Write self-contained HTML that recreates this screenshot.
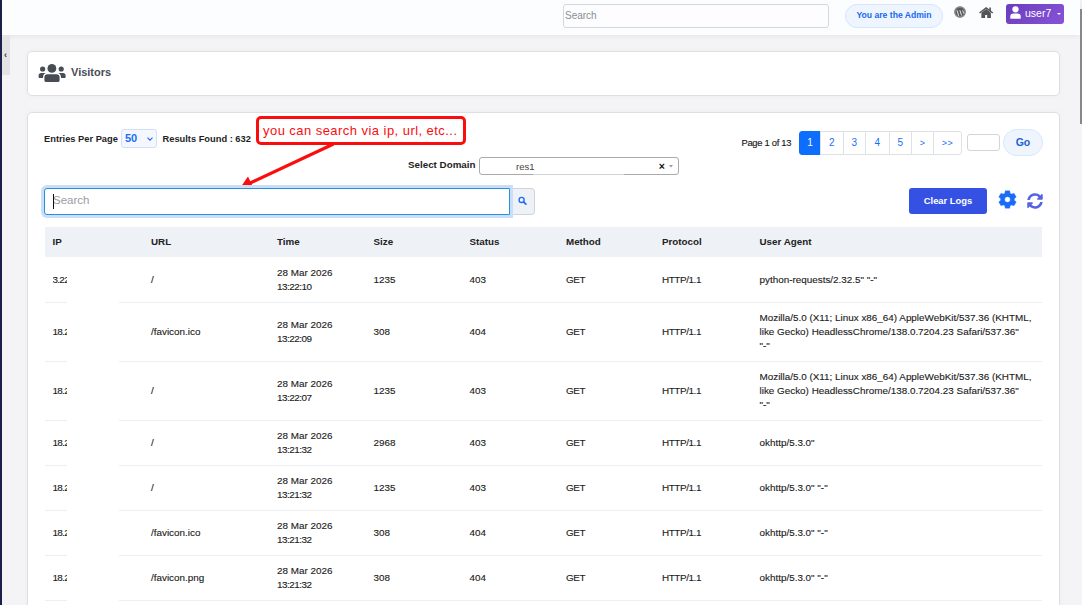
<!DOCTYPE html>
<html><head><meta charset="utf-8">
<style>
*{box-sizing:border-box;margin:0;padding:0}
html,body{width:1082px;height:605px;overflow:hidden}
body{font-family:"Liberation Sans",sans-serif;background:#f4f4f6;position:relative;color:#212529}
.abs{position:absolute}
svg{position:absolute;overflow:visible}
#lstripe{left:0;top:0;width:2px;height:605px;background:#1b1f4b}
#hdr{left:2px;top:0;width:1078px;height:35px;background:#fcfdff;box-shadow:0 1px 5px rgba(0,0,0,.07)}
#rbar{left:1080px;top:9px;width:2px;height:115px;background:#878787}
#tab{left:2px;top:35px;width:8px;height:40px;background:#e3e3e5}
#tabch{left:4px;top:50px;font-size:9px;color:#333;font-weight:bold}
#hsearch{left:563px;top:4px;width:266px;height:24px;border:1px solid #d5d7da;border-radius:3px;background:#fdfdff;font-size:10px;color:#8a8d93;padding:5px 0 0 1px}
#admin{left:845px;top:4px;width:98px;height:24px;border:1px solid #d5e5fa;border-radius:12px;background:#eff5fe;color:#1769f0;font-size:8.6px;font-weight:bold;text-align:center;line-height:21px}
#user{left:1006px;top:4px;width:58px;height:20px;border-radius:3px;background:linear-gradient(135deg,#6a3dbd,#8753d6);color:#fff}
#usertxt{left:1025px;top:7px;font-size:10.5px;color:#fff}
.card{background:#fff;border:1px solid #dfdfe1;border-radius:5px;box-shadow:0 0 6px rgba(0,0,0,.03)}
#card1{left:27px;top:51px;width:1033px;height:45px}
#card2{left:27px;top:112px;width:1033px;height:520px}
#vtitle{left:71px;top:66px;font-size:11px;font-weight:bold;color:#484c55}
.lbl{font-size:9.3px;font-weight:bold;color:#1e1e24;white-space:nowrap}
#epp{left:44px;top:133.5px}
#sel50{left:121px;top:129px;width:36px;height:19px;border:1px solid #cfe0f7;border-radius:3px;background:#f4f8fe}
#sel50t{left:125px;top:131.5px;font-size:11px;color:#1a6ef5;font-weight:bold}
#rf{left:162.5px;top:133.5px;font-size:9.3px}
#callout{left:256px;top:116px;width:210px;height:29px;border:3px solid #fb0d0d;border-radius:5px;background:#fff}
#callt{left:263px;top:123px;font-size:13px;letter-spacing:0.45px;color:#fb0d0d;white-space:nowrap}
#seld{left:408px;top:158.5px;font-size:9.8px}
#domain{left:479px;top:157px;width:200px;height:18px;border:1px solid #aaa;border-radius:3px;background:#fff}
#domt{left:516px;top:161px;font-size:9.5px;color:#444}
#domx{left:658.8px;top:160px;font-size:10.5px;font-weight:bold;color:#111}
#sinput{left:44px;top:188px;width:466px;height:27px;border:1.5px solid #2e8fdd;border-radius:3px 0 0 3px;background:#fff;box-shadow:0 0 0 3px #c9def8;z-index:2}
#sinpt,#caret{z-index:3}
#sinpt{left:53px;top:194px;font-size:11.5px;color:#9a9ca2}
#caret{left:52.5px;top:194px;width:1px;height:15px;background:#111}
#sbtn{left:509px;top:188px;width:26px;height:27px;border:1px solid #cfd4da;border-left:none;border-radius:0 4px 4px 0;background:#eef1f6}
#pagetxt{left:741.5px;top:137px;font-size:9.4px;color:#1a1a1a;letter-spacing:-0.3px;-webkit-text-stroke:0.15px #1a1a1a}
#pag{left:799px;top:131px;height:24px;display:flex}
#pag div{height:24px;border:1px solid #dee2e6;margin-left:-1px;color:#1a6ef5;font-size:10px;text-align:center;line-height:22px;background:#fff}
#pag div.act{background:#0d6efd;border-color:#0d6efd;color:#fff;border-radius:3px 0 0 3px;margin-left:0}
#pag div.last{border-radius:0 3px 3px 0}
#gobox{left:967px;top:134px;width:32.5px;height:17px;border:1px solid #d3d5d9;border-radius:3px;background:#fff}
#gobtn{left:1003px;top:129px;width:40px;height:27px;border:1px solid #d9e7fa;border-radius:14px;background:#eef5fd;color:#1d5fd6;font-size:10.5px;font-weight:bold;text-align:center;line-height:25px}
#clear{left:909px;top:188px;width:78px;height:26px;border-radius:3px;background:#3551e3;color:#fff;font-size:9.4px;font-weight:bold;text-align:center;line-height:26px}
#thead{left:45px;top:227px;width:997px;height:30px;background:#eef1f6}
.th{position:absolute;top:235.5px;font-size:9.8px;font-weight:bold;color:#222}
.row{position:absolute;left:45px;width:997px;border-bottom:1px solid #eceff4}
.row .c{position:absolute;top:0.7px;bottom:0;display:flex;align-items:center;font-size:9.9px;line-height:13.9px;color:#1a1a1a;-webkit-text-stroke:0.12px #1a1a1a;white-space:nowrap;margin-left:-45px}
.row .ipc{width:14.3px;overflow:hidden;letter-spacing:-0.7px}
#mask{left:67px;top:257px;width:52px;height:348px;background:#fff}
</style></head><body>
<div id="lstripe" class="abs"></div>
<div id="hdr" class="abs"></div>
<div id="rbar" class="abs"></div>
<div id="tab" class="abs"></div>
<div id="tabch" class="abs">&#8249;</div>
<div id="hsearch" class="abs">Search</div>
<div id="admin" class="abs">You are the Admin</div>
<!-- WP logo -->
<svg style="left:954px;top:6.2px" width="12" height="12" viewBox="0 0 12 12">
 <circle cx="6" cy="6" r="5.8" fill="#5a5a5a"/>
 <circle cx="6" cy="6" r="5.0" fill="none" stroke="#d8d8dc" stroke-width="0.45"/>
 <path d="M3.0,4.3 L4.7,9.9 M5.9,4.3 L7.5,9.5 M8.7,4.4 L9.7,7.6" fill="none" stroke="#f4f4f6" stroke-width="0.9"/>
</svg>
<!-- home -->
<svg style="left:979px;top:6.5px" width="14" height="12" viewBox="0 0 14 12">
 <path d="M0.5,6.0 L7.15,0.9 L13.8,6.0" fill="none" stroke="#555" stroke-width="1.5" stroke-linejoin="miter"/>
 <rect x="10.3" y="0.5" width="1.6" height="3.6" fill="#555"/>
 <path d="M2.4,5.7 L7.15,2.1 L11.9,5.7 L11.9,10.9 L8.2,10.9 L8.2,8.0 L6.1,8.0 L6.1,10.9 L2.4,10.9Z" fill="#555"/>
</svg>
<div id="user" class="abs"></div>
<svg style="left:1010px;top:6px" width="11" height="13" viewBox="0 0 11 13">
 <circle cx="5.5" cy="3.3" r="3.1" fill="#fff"/>
 <path d="M0.3,12.8 L0.3,10.6 Q0.3,7.4 3.4,7.4 L7.6,7.4 Q10.7,7.4 10.7,10.6 L10.7,12.8Z" fill="#fff"/>
</svg>
<div id="usertxt" class="abs">user7</div>
<svg style="left:1056.5px;top:13.3px" width="4" height="2" viewBox="0 0 4 2"><path d="M0,0 L4,0 L2,2Z" fill="#fff"/></svg>

<div id="card1" class="abs card"></div>
<svg style="left:36px;top:60px" width="32" height="26" viewBox="0 0 32 26">
 <g fill="#484c55">
 <circle cx="6.65" cy="9" r="2.6"/>
 <circle cx="25.2" cy="9" r="2.6"/>
 <path d="M2.6,17.2 L2.6,15.6 Q2.6,12.9 5.3,12.9 L12,12.9 L12,18 L3.4,18 Q2.6,18 2.6,17.2Z"/>
 <path d="M29.6,17.2 L29.6,15.6 Q29.6,12.9 26.9,12.9 L20,12.9 L20,18 L28.8,18 Q29.6,18 29.6,17.2Z"/>
 <path d="M7.7,20.6 L7.7,17.5 Q7.7,13.5 11.7,13.5 L20.3,13.5 Q24.3,13.5 24.3,17.5 L24.3,20.6 Q24.3,22.6 22.3,22.6 L9.7,22.6 Q7.7,22.6 7.7,20.6Z" stroke="#fff" stroke-width="1.4"/>
 <circle cx="15.9" cy="8.4" r="4.4"/>
 </g>
</svg>
<div id="vtitle" class="abs">Visitors</div>

<div id="card2" class="abs card"></div>
<div id="epp" class="abs lbl">Entries Per Page</div>
<div id="sel50" class="abs"></div>
<div id="sel50t" class="abs">50</div>
<svg style="left:147px;top:137px" width="6" height="4" viewBox="0 0 6 4"><path d="M0.5,0.6 L3,3.2 L5.5,0.6" fill="none" stroke="#1a6ef5" stroke-width="1.1"/></svg>
<div id="rf" class="abs lbl">Results Found : 632</div>

<div id="seld" class="abs lbl">Select Domain</div>
<div id="domain" class="abs"></div>
<div id="domt" class="abs">res1</div>
<div class="abs" style="left:533px;top:174px;width:91px;height:1px;background:#d4d4d4"></div>
<div id="domx" class="abs">&#215;</div>
<svg style="left:669.2px;top:165px" width="4" height="3" viewBox="0 0 4 3"><path d="M0,0 L4,0 L2,2.6Z" fill="#999"/></svg>

<div id="sinput" class="abs"></div>
<div id="sinpt" class="abs">Search</div>
<div id="caret" class="abs"></div>
<div id="sbtn" class="abs"></div>
<svg style="left:518px;top:196px" width="9" height="9" viewBox="0 0 9 9">
 <circle cx="3.6" cy="3.9" r="2.55" fill="none" stroke="#1a6ef5" stroke-width="1.35"/>
 <path d="M5.5,5.8 L7.9,8.2" stroke="#1a6ef5" stroke-width="1.7" stroke-linecap="round"/>
</svg>

<!-- callout + arrow -->
<svg style="left:0;top:0" width="1082" height="605" viewBox="0 0 1082 605">
 <path d="M333.5,144 L248,184" stroke="#fb0d0d" stroke-width="3.1"/>
 <path d="M240,188 L248,176.5 L253.5,188Z" fill="#fb0d0d"/>
</svg>
<div id="callout" class="abs"></div>
<div id="callt" class="abs">you can search via ip, url, etc...</div>

<div id="pagetxt" class="abs">Page 1 of 13</div>
<div id="pag" class="abs">
 <div class="act" style="width:22px">1</div>
 <div style="width:23.5px">2</div>
 <div style="width:23.5px">3</div>
 <div style="width:24.5px">4</div>
 <div style="width:23.5px">5</div>
 <div style="width:23px;font-size:9px">&gt;</div>
 <div class="last" style="width:29px;font-size:9px;letter-spacing:0.5px">&gt;&gt;</div>
</div>
<div id="gobox" class="abs"></div>
<div id="gobtn" class="abs">Go</div>

<div id="clear" class="abs">Clear Logs</div>
<svg style="left:997.9px;top:190.2px" width="19" height="19" viewBox="-9.5 -9.5 19 19">
 <path fill-rule="evenodd" fill="#1a6cf8" stroke="#1a6cf8" stroke-width="0.3" stroke-linejoin="round" d="M-2.70,-6.35 L-2.25,-8.82 L2.25,-8.82 L2.70,-6.35 A6.9,6.9 0 0 1 4.15,-5.51 L6.51,-6.36 L8.76,-2.46 L6.85,-0.84 A6.9,6.9 0 0 1 6.85,0.84 L8.76,2.46 L6.51,6.36 L4.15,5.51 A6.9,6.9 0 0 1 2.70,6.35 L2.25,8.82 L-2.25,8.82 L-2.70,6.35 A6.9,6.9 0 0 1 -4.15,5.51 L-6.51,6.36 L-8.76,2.46 L-6.85,0.84 A6.9,6.9 0 0 1 -6.85,-0.84 L-8.76,-2.46 L-6.51,-6.36 L-4.15,-5.51 A6.9,6.9 0 0 1 -2.70,-6.35Z M2.75,0 A2.75,2.75 0 1 0 -2.75,0 A2.75,2.75 0 1 0 2.75,0Z"/>
</svg>
<svg style="left:1026.95px;top:192.75px" width="16" height="16" viewBox="0 0 512 512">
 <path fill="#5562e6" d="M370.72 133.28C339.458 104.008 298.888 87.962 255.848 88c-77.458.068-144.328 53.178-162.791 126.85-1.344 5.363-6.122 9.15-11.651 9.15H24.103c-7.498 0-13.194-6.807-11.807-14.176C33.933 94.924 134.813 8 256 8c66.448 0 126.791 26.136 171.315 68.685L463.03 40.97C478.149 25.851 504 36.559 504 57.941V192c0 13.255-10.745 24-24 24H345.941c-21.382 0-32.090-25.851-16.971-40.971l41.750-41.749zM32 296h134.059c21.382 0 32.090 25.851 16.971 40.971l-41.750 41.750c31.262 29.273 71.835 45.319 114.876 45.280 77.418-.070 144.315-53.144 162.787-126.849 1.344-5.363 6.122-9.150 11.651-9.150h57.304c7.498 0 13.194 6.807 11.807 14.176C478.067 417.076 377.187 504 256 504c-66.448 0-126.791-26.136-171.315-68.685L48.970 471.030C33.851 486.149 8 475.441 8 454.059V320c0-13.255 10.745-24 24-24z"/>
</svg>

<div id="thead" class="abs"></div>
<div class="th" style="left:52.5px">IP</div>
<div class="th" style="left:151px">URL</div>
<div class="th" style="left:277px">Time</div>
<div class="th" style="left:373.5px">Size</div>
<div class="th" style="left:469.5px">Status</div>
<div class="th" style="left:566px">Method</div>
<div class="th" style="left:662px">Protocol</div>
<div class="th" style="left:759.5px">User Agent</div>
<div class="row" style="top:257px;height:46px">
<div class="c ipc" style="left:52.5px">3.228</div>
<div class="c" style="left:151px">/</div>
<div class="c" style="left:277px"><div>28 Mar 2026<br><span style="letter-spacing:-0.5px">13:22:10</span></div></div>
<div class="c" style="left:373.5px">1235</div>
<div class="c" style="left:469.5px">403</div>
<div class="c" style="left:566px" ><span style="letter-spacing:-0.4px">GET</span></div>
<div class="c" style="left:662px" ><span style="letter-spacing:-0.4px">HTTP/1.1</span></div>
<div class="c" style="left:759.5px"><div>python-requests/2.32.5" "-"</div></div>
</div>
<div class="row" style="top:303px;height:59px">
<div class="c ipc" style="left:52.5px">18.23</div>
<div class="c" style="left:151px">/favicon.ico</div>
<div class="c" style="left:277px"><div>28 Mar 2026<br><span style="letter-spacing:-0.5px">13:22:09</span></div></div>
<div class="c" style="left:373.5px">308</div>
<div class="c" style="left:469.5px">404</div>
<div class="c" style="left:566px" ><span style="letter-spacing:-0.4px">GET</span></div>
<div class="c" style="left:662px" ><span style="letter-spacing:-0.4px">HTTP/1.1</span></div>
<div class="c" style="left:759.5px"><div>Mozilla/5.0 (X11; Linux x86_64) AppleWebKit/537.36 (KHTML,<br>like Gecko) HeadlessChrome/138.0.7204.23 Safari/537.36"<br>"-"</div></div>
</div>
<div class="row" style="top:362px;height:59px">
<div class="c ipc" style="left:52.5px">18.23</div>
<div class="c" style="left:151px">/</div>
<div class="c" style="left:277px"><div>28 Mar 2026<br><span style="letter-spacing:-0.5px">13:22:07</span></div></div>
<div class="c" style="left:373.5px">1235</div>
<div class="c" style="left:469.5px">403</div>
<div class="c" style="left:566px" ><span style="letter-spacing:-0.4px">GET</span></div>
<div class="c" style="left:662px" ><span style="letter-spacing:-0.4px">HTTP/1.1</span></div>
<div class="c" style="left:759.5px"><div>Mozilla/5.0 (X11; Linux x86_64) AppleWebKit/537.36 (KHTML,<br>like Gecko) HeadlessChrome/138.0.7204.23 Safari/537.36"<br>"-"</div></div>
</div>
<div class="row" style="top:421px;height:45px">
<div class="c ipc" style="left:52.5px">18.23</div>
<div class="c" style="left:151px">/</div>
<div class="c" style="left:277px"><div>28 Mar 2026<br><span style="letter-spacing:-0.5px">13:21:32</span></div></div>
<div class="c" style="left:373.5px">2968</div>
<div class="c" style="left:469.5px">403</div>
<div class="c" style="left:566px" ><span style="letter-spacing:-0.4px">GET</span></div>
<div class="c" style="left:662px" ><span style="letter-spacing:-0.4px">HTTP/1.1</span></div>
<div class="c" style="left:759.5px"><div>okhttp/5.3.0"</div></div>
</div>
<div class="row" style="top:466px;height:45px">
<div class="c ipc" style="left:52.5px">18.23</div>
<div class="c" style="left:151px">/</div>
<div class="c" style="left:277px"><div>28 Mar 2026<br><span style="letter-spacing:-0.5px">13:21:32</span></div></div>
<div class="c" style="left:373.5px">1235</div>
<div class="c" style="left:469.5px">403</div>
<div class="c" style="left:566px" ><span style="letter-spacing:-0.4px">GET</span></div>
<div class="c" style="left:662px" ><span style="letter-spacing:-0.4px">HTTP/1.1</span></div>
<div class="c" style="left:759.5px"><div>okhttp/5.3.0" "-"</div></div>
</div>
<div class="row" style="top:511px;height:45px">
<div class="c ipc" style="left:52.5px">18.23</div>
<div class="c" style="left:151px">/favicon.ico</div>
<div class="c" style="left:277px"><div>28 Mar 2026<br><span style="letter-spacing:-0.5px">13:21:32</span></div></div>
<div class="c" style="left:373.5px">308</div>
<div class="c" style="left:469.5px">404</div>
<div class="c" style="left:566px" ><span style="letter-spacing:-0.4px">GET</span></div>
<div class="c" style="left:662px" ><span style="letter-spacing:-0.4px">HTTP/1.1</span></div>
<div class="c" style="left:759.5px"><div>okhttp/5.3.0" "-"</div></div>
</div>
<div class="row" style="top:556px;height:45px">
<div class="c ipc" style="left:52.5px">18.23</div>
<div class="c" style="left:151px">/favicon.png</div>
<div class="c" style="left:277px"><div>28 Mar 2026<br><span style="letter-spacing:-0.5px">13:21:32</span></div></div>
<div class="c" style="left:373.5px">308</div>
<div class="c" style="left:469.5px">404</div>
<div class="c" style="left:566px" ><span style="letter-spacing:-0.4px">GET</span></div>
<div class="c" style="left:662px" ><span style="letter-spacing:-0.4px">HTTP/1.1</span></div>
<div class="c" style="left:759.5px"><div>okhttp/5.3.0" "-"</div></div>
</div>
<div class="row" style="top:601px;height:45px">
<div class="c ipc" style="left:52.5px">18.23</div>
<div class="c" style="left:151px">/</div>
<div class="c" style="left:277px"><div>28 Mar 2026<br><span style="letter-spacing:-0.5px">13:21:32</span></div></div>
<div class="c" style="left:373.5px">308</div>
<div class="c" style="left:469.5px">404</div>
<div class="c" style="left:566px" ><span style="letter-spacing:-0.4px">GET</span></div>
<div class="c" style="left:662px" ><span style="letter-spacing:-0.4px">HTTP/1.1</span></div>
<div class="c" style="left:759.5px"><div>okhttp/5.3.0" "-"</div></div>
</div>
<div id="mask" class="abs"></div>
</body></html>
